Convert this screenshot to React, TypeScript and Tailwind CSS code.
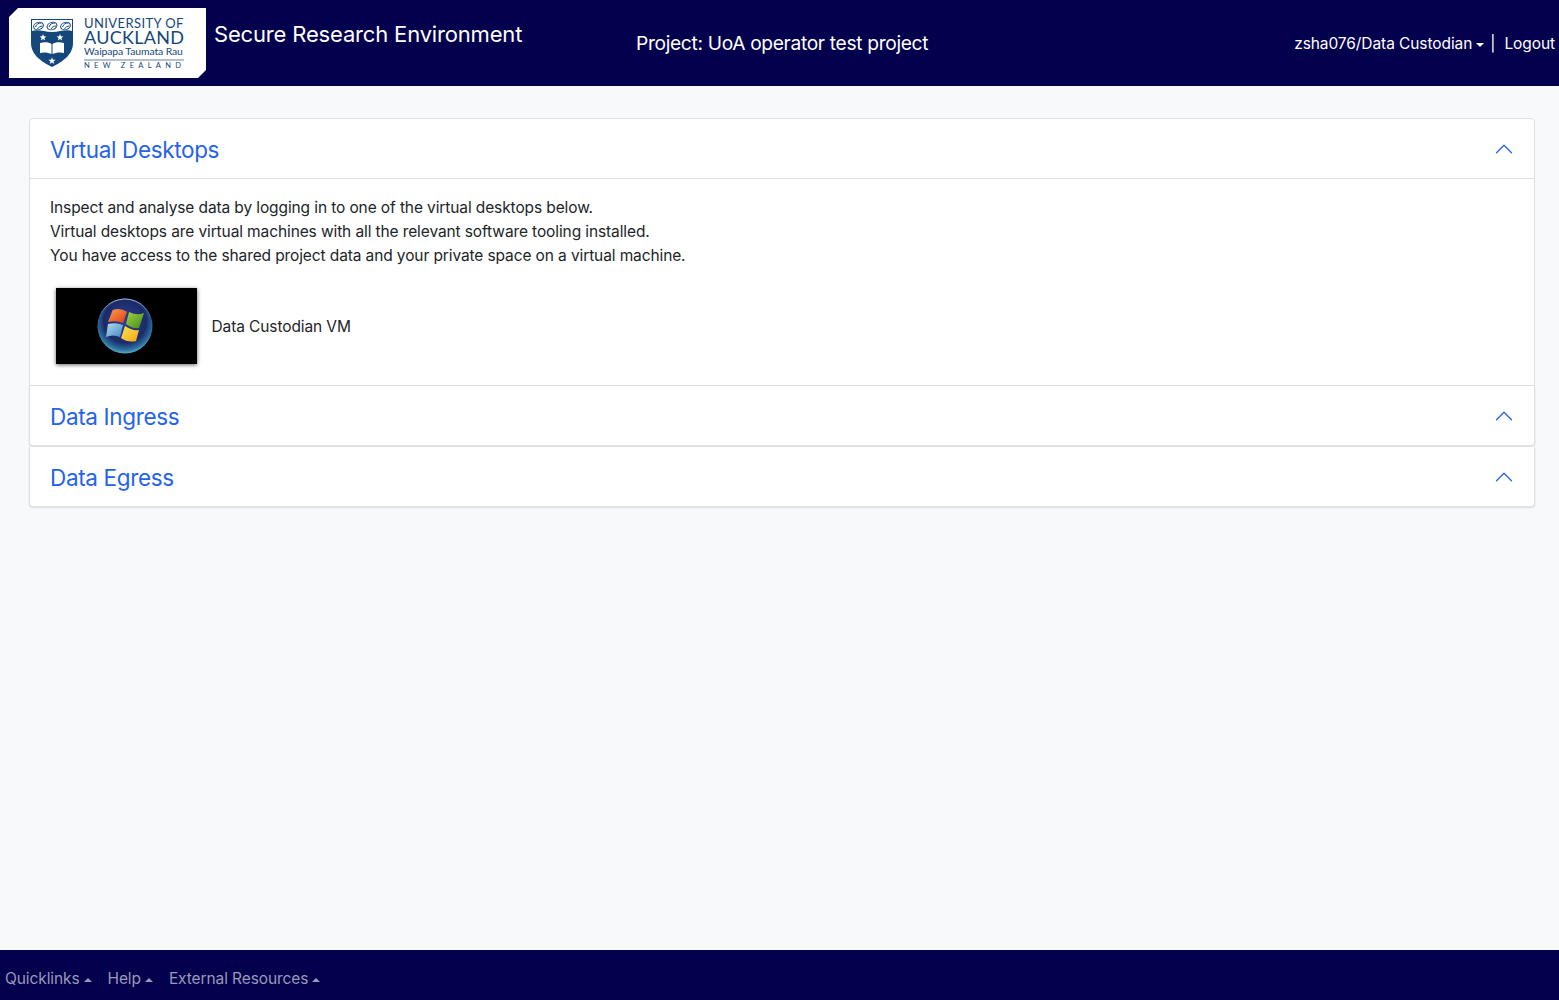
import React from 'react';

const Caret: React.FC<{ up?: boolean }> = ({ up }) => (
    <span className={`inline-block ml-[4px] align-[2px] w-0 h-0 border-x-[4px] border-x-transparent ${up ? 'border-b-[4px] border-b-current' : 'border-t-[4px] border-t-current'}`} />
);

const Chevron: React.FC = () => (
    <svg width="20" height="20" viewBox="0 0 16 16" fill="#2563eb" className="shrink-0 mb-[2px]">
        <path fillRule="evenodd" d="M14.354 11.354a.5.5 0 0 1-.708 0L8 5.707l-5.646 5.647a.5.5 0 0 1-.708-.708l6-6a.5.5 0 0 1 .708 0l6 6a.5.5 0 0 1 0 .708z" />
    </svg>
);

const Star: React.FC<{ x: number; y: number; r: number }> = ({ x, y, r }) => {
    const pts: string[] = [];
    for (let i = 0; i < 10; i++) {
        const rad = i % 2 === 0 ? r : r * 0.42;
        const a = (Math.PI / 5) * i - Math.PI / 2;
        pts.push(`${x + rad * Math.cos(a)},${y + rad * Math.sin(a)}`);
    }
    return <polygon points={pts.join(' ')} fill="#fff" />;
};

const Bird: React.FC<{ x: number }> = ({ x }) => (
    <g fill="none" stroke="#14477c" strokeWidth="1">
        <ellipse cx={x} cy="8" rx="5" ry="3.600" fill="#fff" transform={`rotate(-20 ${x} 8)`} />
        <path d={`M${x - 3} 9c1-3 3-4 6-4M${x - 1} 11c1-2 3-3 5-3`} />
    </g>
);

const Shield: React.FC = () => (
    <svg width="44" height="50" viewBox="0 0 44 50" className="shrink-0">
        <path d="M1 1h42v24c0 12-11 19-21 24C12 44 1 37 1 25z" fill="#14477c" />
        <path d="M2 2h40v11c-6-2-12 1-20 1S8 11 2 13z" fill="#fff" />
        <Bird x={8.500} />
        <Bird x={22} />
        <Bird x={35.500} />
        <Star x={13} y={19.500} r={3.600} />
        <Star x={30} y={19.500} r={3.600} />
        <path d="M10 25c4-1 9-1 11.500 1v10c-3-1.500-8-2-11.500-1zM34 25c-4-1-9-1-11.500 1v10c3-1.500 8-2 11.500-1z" fill="#fff" />
        <Star x={22} y={43} r={3.800} />
    </svg>
);

const Logo: React.FC = () => (
    <div className="w-[197px] h-[70px] bg-white [clip-path:polygon(9px_0,100%_0,100%_62px,189px_100%,0_100%,0_9px)] flex items-center pl-[21px] gap-[10px] text-[#14477c]">
        <Shield />
        <div className="w-[100px] font-['Lato',sans-serif] flex flex-col items-stretch">
            <div className="text-[13px] leading-[14px] tracking-[0.4px] whitespace-nowrap">UNIVERSITY OF</div>
            <div className="text-[18px] leading-[14px] tracking-[0.3px] whitespace-nowrap">AUCKLAND</div>
            <div className="text-[10.400px] leading-[14px] tracking-[-0.1px] whitespace-nowrap border-b-2 border-[#b4bfce] h-[17px]">Waipapa Taumata Rau</div>
            <div className="text-[7.500px] leading-[10px] tracking-[4.300px] whitespace-nowrap">NEW ZEALAND</div>
        </div>
    </div>
);

const WindowsOrb: React.FC = () => (
    <svg width="56" height="56" viewBox="0 0 56 56">
        <defs>
            <radialGradient id="orb" cx="50%" cy="42%" r="62%">
                <stop offset="0%" stopColor="#2f4290" />
                <stop offset="62%" stopColor="#1c2a6a" />
                <stop offset="82%" stopColor="#2a6e9e" />
                <stop offset="100%" stopColor="#6fcadb" />
            </radialGradient>
            <linearGradient id="rim" x1="0" y1="0" x2="0" y2="1">
                <stop offset="0%" stopColor="#9fb4dc" />
                <stop offset="35%" stopColor="#9fb4dc" stopOpacity="0" />
            </linearGradient>
            <linearGradient id="flagRed" x1="0" y1="0" x2="1" y2="1">
                <stop offset="0%" stopColor="#f8a255" />
                <stop offset="100%" stopColor="#e2390f" />
            </linearGradient>
            <linearGradient id="flagGreen" x1="0" y1="0" x2="1" y2="1">
                <stop offset="0%" stopColor="#a6d24a" />
                <stop offset="100%" stopColor="#3f8c12" />
            </linearGradient>
            <linearGradient id="flagBlue" x1="0" y1="0" x2="1" y2="1">
                <stop offset="0%" stopColor="#b6dcea" />
                <stop offset="100%" stopColor="#3f88c6" />
            </linearGradient>
            <linearGradient id="flagYellow" x1="0" y1="0" x2="1" y2="1">
                <stop offset="0%" stopColor="#fde25a" />
                <stop offset="100%" stopColor="#f4a512" />
            </linearGradient>
        </defs>
        <circle cx="28" cy="28" r="27.500" fill="url(#orb)" />
        <circle cx="28" cy="28" r="27" fill="none" stroke="url(#rim)" strokeWidth="1" />
        <path d="M15.700 12Q23 9.500 30 13.700L26 25Q19 22 11 24z" fill="url(#flagRed)" />
        <path d="M32 14Q40 18 47 15L42 30Q35 31 29 26z" fill="url(#flagGreen)" />
        <path d="M11 26Q19 24 26 27L23 39Q16 36 9 39z" fill="url(#flagBlue)" />
        <path d="M28 28Q35 33 42 32L39 43Q31 45 24 40z" fill="url(#flagYellow)" />
    </svg>
);

const AccordionHeader: React.FC<{ title: string }> = ({ title }) => (
    <div className="h-[59px] px-5 pt-[2px] flex items-center justify-between">
        <h2 className="text-[22.500px] pt-[2px] tracking-[-0.35px] text-[#2563eb] leading-none">{title}</h2>
        <Chevron />
    </div>
);

const App: React.FC = () => {
    return (
        <div className="h-screen flex flex-col bg-[#f8f9fa] font-['Inter',sans-serif] text-base text-[#212529]">
            <header className="h-[86px] shrink-0 bg-[#03004d] text-white relative flex pl-[9px] pt-2">
                <Logo />
                <div className="ml-2 text-[22px] leading-[28px] mt-[12px] w-[422px] tracking-[-0.17px]">Secure Research Environment</div>
                <div className="text-[19.200px] leading-[24px] mt-[23px] tracking-[-0.33px]">Project: UoA operator test project</div>
                <div className="ml-auto pr-1 mt-[24px] leading-[24px] text-[15.500px] tracking-[-0.08px] whitespace-nowrap">
                    zsha076/Data Custodian<Caret />
                    <span className="ml-[6px] mr-[9px]">|</span>
                    Logout
                </div>
            </header>

            <main className="flex-1 pt-[32px] px-[29px]">
                <div className="w-[1506px] flex flex-col">
                    <div className="bg-white border border-[#dfe0e1] rounded-t-[4px]">
                        <AccordionHeader title="Virtual Desktops" />
                        <div className="border-t border-[#dfe0e1] px-5 pt-[17px] h-[207px]">
                            <p className="leading-6 text-[15.500px] tracking-[-0.11px]">
                                Inspect and analyse data by logging in to one of the virtual desktops below.<br />
                                Virtual desktops are virtual machines with all the relevant software tooling installed.<br />
                                You have access to the shared project data and your private space on a virtual machine.
                            </p>
                            <div className="flex items-center mt-[20px] ml-[5.500px]">
                                <div className="w-[141px] h-[76px] bg-black flex items-center justify-center pr-[2px] shadow-[0_1px_4px_rgba(0,0,0,0.6)]">
                                    <WindowsOrb />
                                </div>
                                <span className="ml-[15px] pt-[1px] text-[15.500px] tracking-[-0.11px]">Data Custodian VM</span>
                            </div>
                        </div>
                    </div>
                    <div className="bg-white border border-t-0 border-[#dfe0e1] shadow-[0_1px_2px_rgba(0,0,0,0.12)] rounded-b-[4px] mb-px">
                        <AccordionHeader title="Data Ingress" />
                    </div>
                    <div className="bg-white border border-t-0 border-[#dfe0e1] shadow-[0_1px_2px_rgba(0,0,0,0.12)] rounded-b-[4px]">
                        <AccordionHeader title="Data Egress" />
                    </div>
                </div>
            </main>

            <footer className="h-[50px] shrink-0 bg-[#03004d] text-[#9a99b8] flex items-center pl-[5px] gap-4 text-[15.500px] tracking-[-0.1px] pt-[7px]">
                <span>Quicklinks<Caret up /></span>
                <span>Help<Caret up /></span>
                <span>External Resources<Caret up /></span>
            </footer>
        </div>
    );
};

export default App;
